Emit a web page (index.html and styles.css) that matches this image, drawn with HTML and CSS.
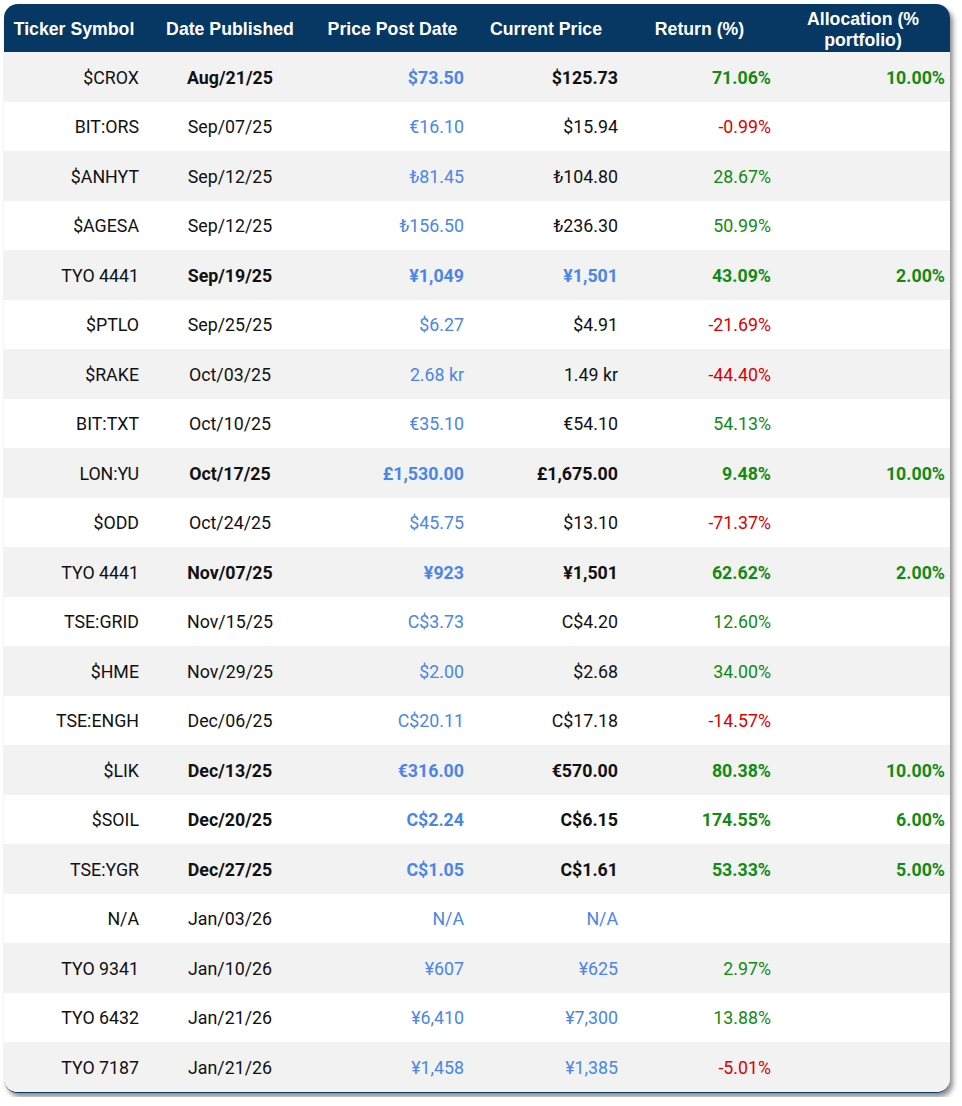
FILE: index.html
```html
<!DOCTYPE html>
<html>
<head>
<meta charset="utf-8">
<link rel="stylesheet" href="styles.css">
</head>
<body>
<div class="card">
<table class="grid">
<colgroup>
<col class="c1"><col class="c2"><col class="c3"><col class="c4"><col class="c5"><col class="c6">
</colgroup>
<thead>
<tr>
<th>Ticker Symbol</th><th>Date Published</th><th>Price Post Date</th><th>Current Price</th><th>Return (%)</th><th>Allocation (% portfolio)</th>
</tr>
</thead>
<tbody>
<tr class="b"><td class="tk">$CROX</td><td class="dt">Aug/21/25</td><td class="bl">$73.50</td><td>$125.73</td><td class="gr">71.06%</td><td class="gr">10.00%</td></tr>
<tr><td class="tk">BIT:ORS</td><td class="dt">Sep/07/25</td><td class="bl">€16.10</td><td>$15.94</td><td class="rd">-0.99%</td><td></td></tr>
<tr><td class="tk">$ANHYT</td><td class="dt">Sep/12/25</td><td class="bl">₺81.45</td><td>₺104.80</td><td class="gr">28.67%</td><td></td></tr>
<tr><td class="tk">$AGESA</td><td class="dt">Sep/12/25</td><td class="bl">₺156.50</td><td>₺236.30</td><td class="gr">50.99%</td><td></td></tr>
<tr class="b"><td class="tk">TYO 4441</td><td class="dt">Sep/19/25</td><td class="bl">¥1,049</td><td class="bl">¥1,501</td><td class="gr">43.09%</td><td class="gr">2.00%</td></tr>
<tr><td class="tk">$PTLO</td><td class="dt">Sep/25/25</td><td class="bl">$6.27</td><td>$4.91</td><td class="rd">-21.69%</td><td></td></tr>
<tr><td class="tk">$RAKE</td><td class="dt">Oct/03/25</td><td class="bl">2.68 kr</td><td>1.49 kr</td><td class="rd">-44.40%</td><td></td></tr>
<tr><td class="tk">BIT:TXT</td><td class="dt">Oct/10/25</td><td class="bl">€35.10</td><td>€54.10</td><td class="gr">54.13%</td><td></td></tr>
<tr class="b"><td class="tk">LON:YU</td><td class="dt">Oct/17/25</td><td class="bl">£1,530.00</td><td>£1,675.00</td><td class="gr">9.48%</td><td class="gr">10.00%</td></tr>
<tr><td class="tk">$ODD</td><td class="dt">Oct/24/25</td><td class="bl">$45.75</td><td>$13.10</td><td class="rd">-71.37%</td><td></td></tr>
<tr class="b"><td class="tk">TYO 4441</td><td class="dt">Nov/07/25</td><td class="bl">¥923</td><td>¥1,501</td><td class="gr">62.62%</td><td class="gr">2.00%</td></tr>
<tr><td class="tk">TSE:GRID</td><td class="dt">Nov/15/25</td><td class="bl">C$3.73</td><td>C$4.20</td><td class="gr">12.60%</td><td></td></tr>
<tr><td class="tk">$HME</td><td class="dt">Nov/29/25</td><td class="bl">$2.00</td><td>$2.68</td><td class="gr">34.00%</td><td></td></tr>
<tr><td class="tk">TSE:ENGH</td><td class="dt">Dec/06/25</td><td class="bl">C$20.11</td><td>C$17.18</td><td class="rd">-14.57%</td><td></td></tr>
<tr class="b"><td class="tk">$LIK</td><td class="dt">Dec/13/25</td><td class="bl">€316.00</td><td>€570.00</td><td class="gr">80.38%</td><td class="gr">10.00%</td></tr>
<tr class="b"><td class="tk">$SOIL</td><td class="dt">Dec/20/25</td><td class="bl">C$2.24</td><td>C$6.15</td><td class="gr">174.55%</td><td class="gr">6.00%</td></tr>
<tr class="b"><td class="tk">TSE:YGR</td><td class="dt">Dec/27/25</td><td class="bl">C$1.05</td><td>C$1.61</td><td class="gr">53.33%</td><td class="gr">5.00%</td></tr>
<tr><td class="tk">N/A</td><td class="dt">Jan/03/26</td><td class="bl">N/A</td><td class="bl">N/A</td><td></td><td></td></tr>
<tr><td class="tk">TYO 9341</td><td class="dt">Jan/10/26</td><td class="bl">¥607</td><td class="bl">¥625</td><td class="gr">2.97%</td><td></td></tr>
<tr><td class="tk">TYO 6432</td><td class="dt">Jan/21/26</td><td class="bl">¥6,410</td><td class="bl">¥7,300</td><td class="gr">13.88%</td><td></td></tr>
<tr><td class="tk">TYO 7187</td><td class="dt">Jan/21/26</td><td class="bl">¥1,458</td><td class="bl">¥1,385</td><td class="rd">-5.01%</td><td></td></tr>
</tbody>
</table>
</div>
</body>
</html>
```
FILE: styles.css
```css
html, body {
  margin: 0;
  padding: 0;
  background: #ffffff;
}
body {
  padding: 4px;
}
.card {
  width: 946px;
  border-radius: 14px;
  overflow: hidden;
  background: #ffffff;
  border-bottom: 1.5px solid #073763;
  box-shadow: 3px 4px 5px rgba(0, 0, 0, 0.45);
}
.grid {
  width: 946px;
  border-collapse: collapse;
  table-layout: fixed;
  font-family: Roboto, "Liberation Sans", sans-serif;
  font-size: 17.8px;
  color: #111111;
}
.c1 { width: 140px; }
.c2 { width: 172px; }
.c3 { width: 153px; }
.c4 { width: 154px; }
.c5 { width: 153px; }
.c6 { width: 174px; }
.grid th {
  background: #073763;
  color: #ffffff;
  font-family: "Liberation Sans", Arial, sans-serif;
  font-weight: bold;
  font-size: 17.7px;
  line-height: 21px;
  height: 48px;
  padding: 3px 5px 0;
  text-align: center;
  vertical-align: middle;
  box-sizing: border-box;
}
.grid td {
  height: 49.5px;
  padding: 1px 5px 0;
  text-align: right;
  vertical-align: middle;
  white-space: nowrap;
  box-sizing: border-box;
}
.grid tbody tr:nth-child(odd) td {
  background: #f2f2f2;
}
.grid td.dt {
  text-align: center;
}
.grid tr.b td {
  font-weight: bold;
}
.grid tr.b td.tk {
  font-weight: normal;
}
.bl { color: #4a86e8; }
.gr { color: #138a13; }
.rd { color: #dd0000; }
```
